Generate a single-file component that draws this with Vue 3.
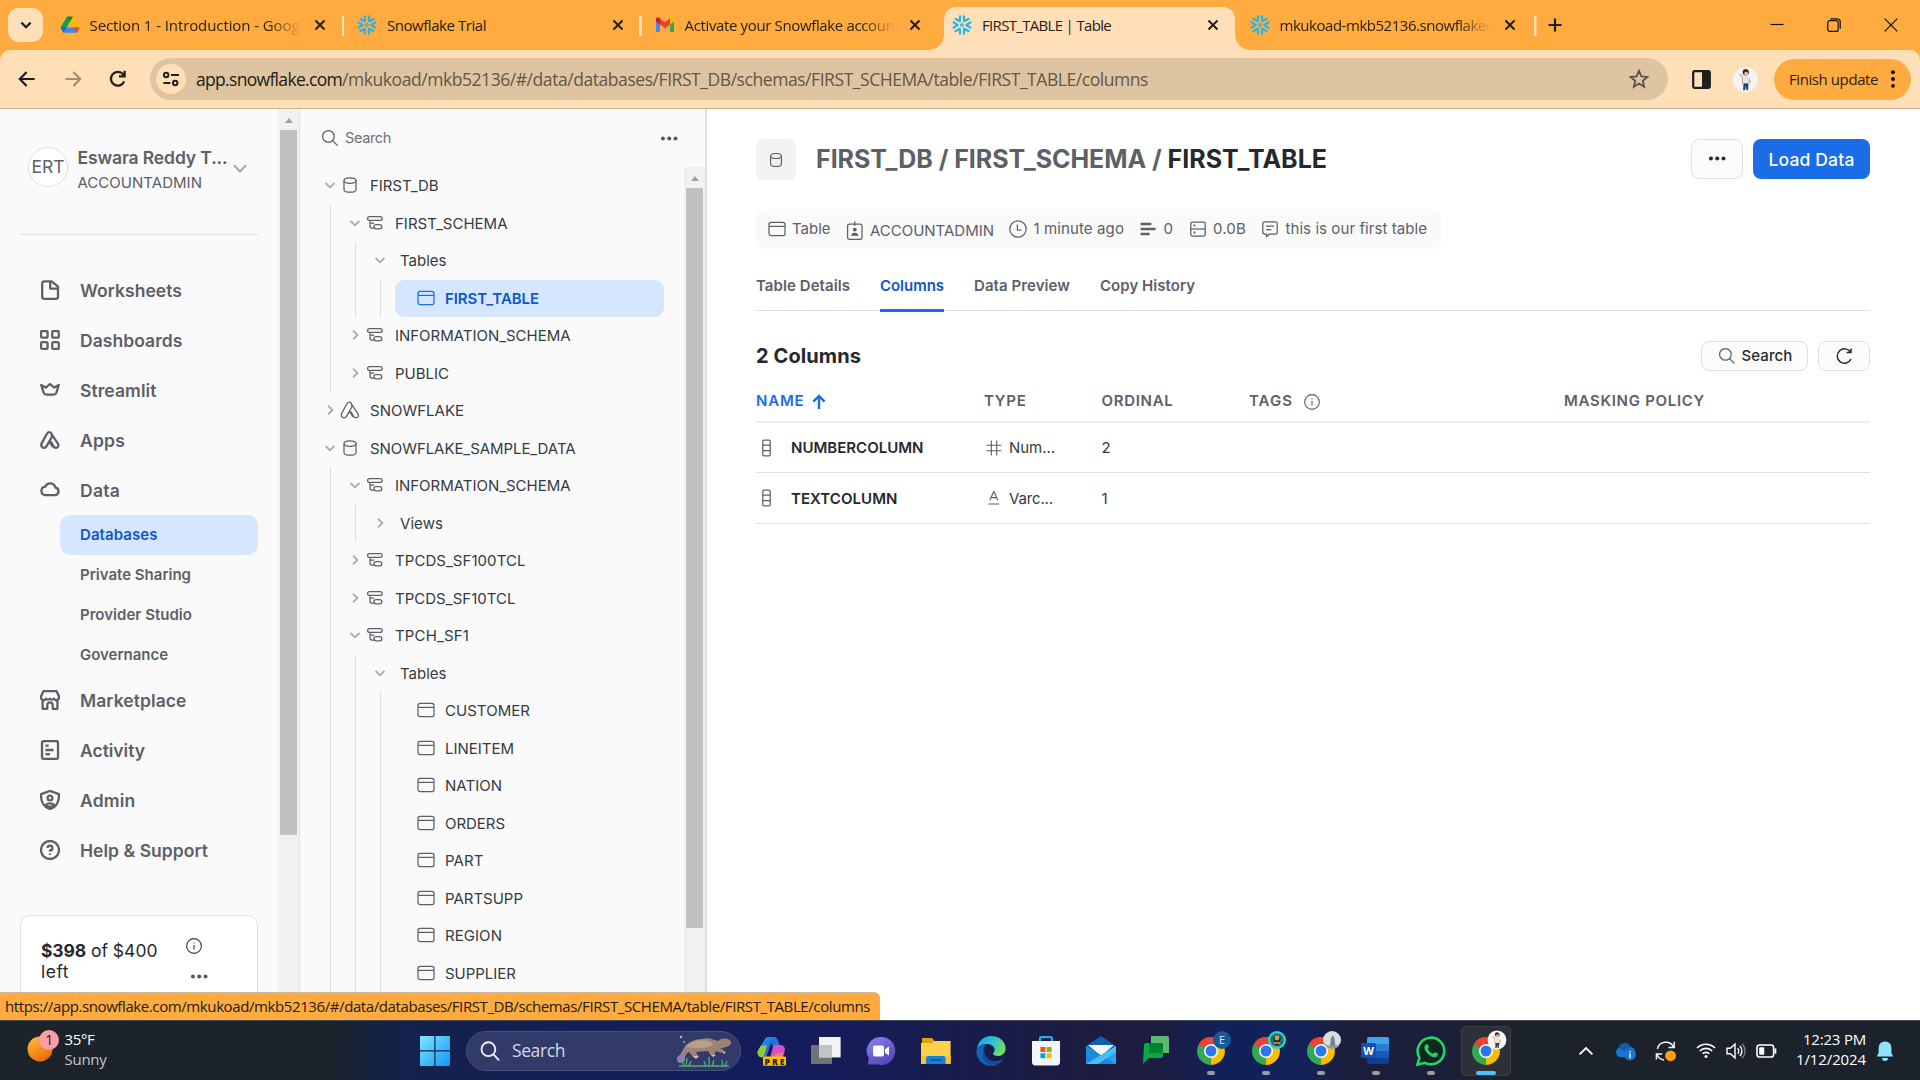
<script setup>
// Spreads a label over a given advance width through its letter-spacing.
const vFit = {
  mounted(el, { value }) {
    const n = el.textContent.length
    const natural = el.getBoundingClientRect().width
    el.style.letterSpacing = ((value - natural) / n).toFixed(3) + 'px'
  },
}

const flake =
  '<g transform="translate(10 10)" fill="none" stroke="#29b5e8" stroke-width="2.3" stroke-linecap="round" stroke-linejoin="round">' +
  [30, 90, 150, 210, 270, 330].map((a) => `<path transform="rotate(${a})" d="M-2.6-8.4L0-4.4L2.6-8.4"/>`).join('') +
  '<path d="M0-1.5L1.5 0L0 1.5L-1.5 0Z" stroke-width="1.3"/></g>'

const appsPath =
  '<path d="M9.3 2.2C8.1 2.2 7.4 2.9 6.8 4L1.6 13.4C.7 15.2 1.6 17.6 3.8 17.8C5.3 17.9 6.2 17 6.8 15.9L11.8 7M11.8 7V4.2C11.4 2.9 10.6 2.2 9.3 2.2M11.8 4.6L17.9 13.6C19 15.5 18.2 17.6 16.1 17.8C14.6 17.9 13.8 17 13.2 15.9L10.8 11.6M6.8 16L9.6 11.2L12.8 17"/>'

const icons = {
  worksheets: '<path d="M4.2 1.3H11.6L18 6.7V16.8A2 2 0 0 1 16 18.8H4.2A2 2 0 0 1 2.2 16.8V3.3A2 2 0 0 1 4.2 1.3ZM10.2 1.5V8.6H17.8"/>',
  dashboards: '<rect x="1" y="1" width="6.6" height="6.6" rx="1.4"/><rect x="12.2" y="1" width="6.6" height="6.6" rx="1.4"/><rect x="1" y="12.2" width="6.6" height="6.6" rx="1.4"/><rect x="12.2" y="12.2" width="6.6" height="6.6" rx="1.4"/>',
  streamlit: '<path d="M1.2 5L5.8 7.6L10 4L14.2 7.6L18.8 5L16.4 12.6A3 3 0 0 1 13.5 14.6H6.5A3 3 0 0 1 3.6 12.6Z"/>',
  apps: appsPath,
  data: '<path d="M5 16.2H15A3.9 3.9 0 0 0 15.4 8.5A5.4 5.4 0 0 0 5.2 7.7A4.3 4.3 0 0 0 5 16.2Z" transform="translate(0 -1)"/>',
  marketplace: '<path d="M3.6 1H16.4L19 6.4V8A2.6 2.6 0 0 1 14 8.6A2.5 2.5 0 0 1 10 8.6A2.5 2.5 0 0 1 6 8.6A2.6 2.6 0 0 1 1 8V6.4ZM2.6 10.2V18.8H7.3V15A2.7 2.7 0 0 1 12.7 15V18.8H17.4V10.2"/>',
  activity: '<rect x="2" y="1" width="16" height="18" rx="2"/><path d="M5.4 5.6H8.6M5.4 10H13.6M5.4 14.2H10"/>',
  admin: '<path d="M10 .9L18.9 4.2C19.4 11 16.6 17.2 10 19C3.4 17.2 .6 11 1.1 4.2Z"/><circle cx="10" cy="8" r="2.4"/><path d="M5.4 15.4C7 12.8 13 12.8 14.6 15.4L10 17Z"/>',
  help: '<circle cx="10" cy="10" r="9"/><path d="M7.6 8A2.4 2.4 0 1 1 10 10.5V11.6M10 13.6V15"/>',
  db: '<path d="M4 5.6V14.4C4 16.4 6.6 17.2 10 17.2S16 16.4 16 14.4V5.6"/><ellipse cx="10" cy="5.6" rx="6" ry="2.8"/>',
  schema: '<rect x="2.6" y="3.6" width="14.6" height="3.8" rx="1.9"/><path d="M5 7.4V13A2 2 0 0 0 7 15H9M5 10H9.2"/><rect x="9" y="11.6" width="7.8" height="4.2" rx="2.1"/>',
  table: '<rect x="2" y="3.4" width="16" height="13.2" rx="2.2"/><path d="M2 7.4H18"/>',
  open: '<path d="M5.6 8L10 12.4L14.4 8" stroke="#a8abaf" stroke-width="1.8"/>',
  closed: '<path d="M8 5.6L12.4 10L8 14.4" stroke="#a8abaf" stroke-width="1.8"/>',
  search: '<circle cx="8.4" cy="8.4" r="5.8"/><path d="M12.7 12.7L17.6 17.6"/>',
  role: '<rect x="2.6" y="3" width="14.4" height="15.4" rx="2"/><path d="M9.8 .6V5"/><circle cx="9.8" cy="8.6" r="1.3" fill="#5d6066"/><path d="M6.9 14.2C7 11.6 12.6 11.6 12.7 14.2Z" fill="#5d6066"/>',
  clock: '<circle cx="10" cy="10" r="8.2"/><path d="M9.4 5.4V11H13.4"/>',
  rows: '<path d="M2.6 5H13.4M2.6 10H17.6M2.6 15H11.6" stroke-width="2.4"/>',
  storage: '<rect x="2.8" y="3" width="14.4" height="14" rx="1.6"/><path d="M2.8 10H17.2"/><path d="M5.6 6.5H7.4M5.6 13.5H7.4" stroke-width="1.8"/>',
  comment: '<path d="M4.8 2.8H15.2A2 2 0 0 1 17.2 4.8V13A2 2 0 0 1 15.2 15H9.4L6.6 17.8V15H4.8A2 2 0 0 1 2.8 13V4.8A2 2 0 0 1 4.8 2.8ZM6 7H14M6 10.6H11.4"/>',
  refresh: '<path d="M17 13A7.2 7.2 0 1 1 16.4 6M17 2.4V6.6H12.6"/>',
  column: '<rect x="6.8" y="2" width="7.4" height="15.8" rx="1.4"/><path d="M6.8 7H14.2M6.8 12.6H14.2"/>',
  number: '<path d="M7 1.8V18.2M13 1.8V18.2M1.6 7H18.4M1.6 13H18.4"/>',
  varchar: '<path d="M5.4 12.6L9.8 2.4L14.2 12.6M6.8 9.6H12.8M3.8 16.6H15.8"/>',
  info: '<circle cx="10" cy="10" r="8.2"/><path d="M10 9V14M10 6V7.2"/>',
  flake,
  drive: '<path d="M7 1.4H13L19.6 12.6H13.4Z" fill="#fbbc04"/><path d="M7 1.4L.6 12.6L3.6 17.8L10 6.8Z" fill="#189d4e"/><path d="M3.6 17.8L6.6 12.6H19.6L16.6 17.8Z" fill="#4285f4"/><path d="M13.4 12.6H19.6L16.6 17.8Z" fill="#ea4335"/><path d="M7 1.4H13L10 6.8Z" fill="#188038"/><path d="M3.6 17.8L.6 12.6H6.6Z" fill="#1967d2"/>',
  gmail: '<path d="M1 4V17H5V9.5L1 6Z" fill="#4285f4"/><path d="M19 4V17H15V9.5L19 6Z" fill="#34a853"/><path d="M1 6.4V4.6C1 2.4 3.2 1.8 4.6 3L10 7.2L15.2 3V9.4L10 13.2L4.9 9.4Z" fill="#ea4335"/><path d="M1 4.4C1.2 2.2 3.4 2 5 3.3V9.4L1 6.4Z" fill="#c5221f"/><path d="M15 3.3C16.6 2 18.9 2.4 19 4.5V6.4L15 9.4Z" fill="#fbbc04"/>',
}

const tabs = [
  { icon: 'drive', title: 'Section 1 - Introduction - Goog', w: 210, fade: true, first: true },
  { icon: 'flake', title: 'Snowflake Trial', w: 99, sep: true },
  { icon: 'gmail', title: 'Activate your Snowflake accoun', w: 210, fade: true, sep: true },
  { icon: 'flake', title: 'FIRST_TABLE | Table', w: 129, active: true },
  { icon: 'flake', title: 'mkukoad-mkb52136.snowflakec', w: 213, fade: true },
]

const nav = [
  { icon: 'worksheets', label: 'Worksheets', w: 102 },
  { icon: 'dashboards', label: 'Dashboards', w: 102.5 },
  { icon: 'streamlit', label: 'Streamlit', w: 76.5 },
  { icon: 'apps', label: 'Apps', w: 45 },
  { icon: 'data', label: 'Data', w: 40 },
  { sub: true, active: true, label: 'Databases', w: 77.5 },
  { sub: true, label: 'Private Sharing', w: 111 },
  { sub: true, label: 'Provider Studio', w: 112 },
  { sub: true, label: 'Governance', w: 88 },
  { icon: 'marketplace', label: 'Marketplace', w: 106.5 },
  { icon: 'activity', label: 'Activity', w: 65 },
  { icon: 'admin', label: 'Admin', w: 55.5 },
  { icon: 'help', label: 'Help & Support', w: 128 },
]

const tree = [
  { d: 0, c: 'open', icon: 'db', label: 'FIRST_DB', w: 68.5 },
  { d: 1, c: 'open', icon: 'schema', label: 'FIRST_SCHEMA', w: 112.5 },
  { d: 2, c: 'open', label: 'Tables', w: 46.5 },
  { d: 3, icon: 'table', label: 'FIRST_TABLE', w: 94, active: true },
  { d: 1, c: 'closed', icon: 'schema', label: 'INFORMATION_SCHEMA', w: 175.5 },
  { d: 1, c: 'closed', icon: 'schema', label: 'PUBLIC', w: 54 },
  { d: 0, c: 'closed', icon: 'apps', label: 'SNOWFLAKE', w: 94 },
  { d: 0, c: 'open', icon: 'db', label: 'SNOWFLAKE_SAMPLE_DATA', w: 205.5 },
  { d: 1, c: 'open', icon: 'schema', label: 'INFORMATION_SCHEMA', w: 175.5 },
  { d: 2, c: 'closed', label: 'Views', w: 43 },
  { d: 1, c: 'closed', icon: 'schema', label: 'TPCDS_SF100TCL', w: 130.5 },
  { d: 1, c: 'closed', icon: 'schema', label: 'TPCDS_SF10TCL', w: 120.5 },
  { d: 1, c: 'open', icon: 'schema', label: 'TPCH_SF1', w: 74 },
  { d: 2, c: 'open', label: 'Tables', w: 46.5 },
  { d: 3, icon: 'table', label: 'CUSTOMER', w: 85 },
  { d: 3, icon: 'table', label: 'LINEITEM', w: 69 },
  { d: 3, icon: 'table', label: 'NATION', w: 57 },
  { d: 3, icon: 'table', label: 'ORDERS', w: 60 },
  { d: 3, icon: 'table', label: 'PART', w: 38.5 },
  { d: 3, icon: 'table', label: 'PARTSUPP', w: 78 },
  { d: 3, icon: 'table', label: 'REGION', w: 57 },
  { d: 3, icon: 'table', label: 'SUPPLIER', w: 71 },
]

const meta = [
  { icon: 'table', label: 'Table', w: 38.5 },
  { icon: 'role', label: 'ACCOUNTADMIN', w: 124 },
  { icon: 'clock', label: '1 minute ago', w: 90.5 },
  { icon: 'rows', label: '0', w: 10 },
  { icon: 'storage', label: '0.0B', w: 33 },
  { icon: 'comment', label: 'this is our first table', w: 141.5 },
]

const sections = [
  { label: 'Table Details', w: 94 },
  { label: 'Columns', w: 64, active: true },
  { label: 'Data Preview', w: 96 },
  { label: 'Copy History', w: 95 },
]

const rows = [
  { name: 'NUMBERCOLUMN', w: 132.5, icon: 'number', type: 'Num...', tw: 46, ord: '2' },
  { name: 'TEXTCOLUMN', w: 106.5, icon: 'varchar', type: 'Varc...', tw: 44, ord: '1' },
]

const chrome =
  '<path d="M15 15L2.9 8A14 14 0 0 1 27.1 8Z" fill="#ea4335"/><path d="M15 15L15 29A14 14 0 0 1 2.9 8Z" fill="#34a853"/><path d="M15 15L27.1 8A14 14 0 0 1 15 29Z" fill="#fbbc04"/><path d="M15 8.4H27.4A14 14 0 0 1 27.8 9.4L20 14Z" fill="#fbbc04"/><path d="M2.9 8L9 18.4L15 15Z" fill="#34a853"/><path d="M2.9 8A14 14 0 0 1 27.3 8.4H15L9 12Z" fill="#ea4335"/><circle cx="15" cy="15" r="7" fill="#fff"/><circle cx="15" cy="15" r="5.5" fill="#2b76ec"/>'
const person =
  '<path d="M-2.2-8C-.5-10 3-9 3-6.2C3-4 1.6-3.4.2-3.4C-1.6-3.4-3-5-2.2-8Z" fill="#3d2a24"/><circle cx=".6" cy="-5" r="1.8" fill="#e8b48e"/><path d="M-5-4.6L-2.4-1.6V3.4H2.6V-1L4.4 2.6" stroke="#d9a47e" stroke-width="1.2" fill="none"/><path d="M-2.4-3L2.8-3.2V3.6H-2Z" fill="#e2e7ea"/><path d="M-1.8 3.4H2.6L2.2 9.4H.8L.4 5.4L-.4 9.4H-2Z" fill="#27415f"/>'

const apps = [
  { art: '<defs><linearGradient id="cp" x2="1" y2="1"><stop stop-color="#1fa2f0"/><stop offset=".5" stop-color="#1873e0"/><stop offset="1" stop-color="#d74fd0"/></linearGradient></defs><path d="M9 3C10 1 11.4 1 14 1H18C21 1 21.8 3.4 22.4 6L24 11H17L15 6.4L11 19C10.2 21.6 8.4 21.6 6 21.6C2.6 21.4.8 18 2 14.4Z" fill="url(#cp)"/><path d="M1.8 15L5 9.6H11L8.4 18.6C7.8 21 6 21.6 4.4 21C2 20 1 18 1.8 15Z" fill="#95c93a"/><path d="M19 9H25C28.4 9.4 29.6 12.4 28.6 15.6L26.8 21.6H14L16.6 12.4C17.2 10.4 17.8 9 19 9Z" fill="#d451c6"/><path d="M20 17H27.6L26.4 22H15Z" fill="#f07a6a"/><rect x="7" y="20.4" width="23" height="9.4" rx="1.6" fill="#ffc400"/>', pre: true },
  { art: '<rect x="0" y="9" width="21" height="19" fill="#717276"/><rect x="8" y="1" width="21.6" height="20.4" fill="#f4f4f5"/><rect x="8" y="9" width="13" height="12.4" fill="#c3c4c8"/>' },
  { art: '<defs><linearGradient id="tc" x2=".6" y2="1"><stop stop-color="#8a84f2"/><stop offset="1" stop-color="#5a45bd"/></linearGradient></defs><path d="M15 1A14 14 0 1 1 12 28.6L1.6 28.6L3 22.6A14 14 0 0 1 15 1Z" fill="url(#tc)"/><rect x="7" y="9.4" width="11" height="11" rx="1.8" fill="#fff"/><path d="M19 13.2L23 10.6V19.4L19 16.8Z" fill="#fff"/>' },
  { art: '<path d="M1 2H11L14 5.4H28V12H1Z" fill="#e3a008"/><path d="M0 7H11L13.6 5H29.6V28H0Z" fill="#ffd04c"/><path d="M0 20H29.6V28H0Z" fill="#fbc22f"/><path d="M5 28V22.4A2.4 2.4 0 0 1 7.4 20H22A2.4 2.4 0 0 1 24.6 22.4V28Z" fill="#1282d8"/><path d="M9 24H20.6" stroke="#0c5a9e" stroke-width="1.6"/>' },
  { art: '<defs><linearGradient id="ed" x2="1" y2=".3"><stop stop-color="#1fa3e4"/><stop offset=".6" stop-color="#2ac3d5"/><stop offset="1" stop-color="#6fdc61"/></linearGradient></defs><path d="M1 13C2 5 8 0 15 0C24 0 29.6 6 29.6 12.4C29.6 17 26 20 21.6 20C18.6 20 17 19 17 17.8C17 17 18.6 16.4 18.6 13.6C18.6 10.6 15 8 10.4 8C6 8 2.6 10 1 13Z" fill="url(#ed)"/><path d="M.4 14.6C2 9.6 6 8 10.2 8C7 11 6.6 17 9 20.6C12 25.4 20 27.4 27.4 22.4C24.6 27.4 20 29.8 15 29.8C6 29.8 0 23 .4 14.6Z" fill="#1264b8"/><path d="M10.2 8C5 14 9.6 25 19.4 25.6C22.6 25.6 25.2 24 27.4 22.4C25 26.6 21 29.6 16 29.8C7 27.6 3 15.4 10.2 8Z" fill="#124b9a"/>' },
  { art: '<path d="M9 7V2.6A1.4 1.4 0 0 1 10.4 1.2H19.6A1.4 1.4 0 0 1 21 2.6V7" fill="none" stroke="#2aa7ee" stroke-width="2.2"/><path d="M1 5H29V26A3.4 3.4 0 0 1 25.6 29.4H4.4A3.4 3.4 0 0 1 1 26Z" fill="#f3f5f7"/><rect x="9.4" y="11" width="5" height="5" fill="#f25022"/><rect x="15.6" y="11" width="5" height="5" fill="#7fba00"/><rect x="9.4" y="17.2" width="5" height="5" fill="#00a4ef"/><rect x="15.6" y="17.2" width="5" height="5" fill="#ffb900"/>' },
  { art: '<path d="M15 0L30 10V20H0V10Z" fill="#0e5fb0"/><path d="M2 9H28L15 20Z" fill="#f5f8fb"/><path d="M0 10L15 20L30 10V28H0Z" fill="#2aa3ea"/><path d="M0 10L30 28H0Z" fill="#1b8be0"/><path d="M30 10L0 28H12L30 16Z" fill="#44c0f4"/>' },
  { art: '<path d="M10 0H26A2 2 0 0 1 28 2V17H10Z" fill="#5bb974"/><path d="M3 9A2 2 0 0 1 5 7H22V20A2 2 0 0 1 20 22H7.6L2 28Z" fill="#00ac47"/><path d="M8 7H22V17H8Z" fill="#00832d"/>' },
  { art: chrome, running: true, badge: '<circle r="9" fill="#17599b"/>', letter: 'E' },
  { art: chrome, running: true, badge: '<circle r="9" fill="#1de0c6"/><circle r="6.8" fill="#3b6870"/><path d="M-4-3H4L2 5H-2Z" fill="#1e2b32"/><circle cy="-2" r="2.4" fill="#caa05f"/><path d="M-3 3H3" stroke="#e0b040" stroke-width="1.4"/>' },
  { art: chrome, running: true, badge: '<circle r="9" fill="#d8dde0"/><path d="M-2 6L-1-2L1-5L2.6-1L3.4 6Z" fill="#77838c"/><path d="M-8 3C-5 7 5 7 8 3C6 8 2 9 0 9C-4 9-7 6-8 3Z" fill="#929c94"/>' },
  { art: '<path d="M8 1H26A2 2 0 0 1 28 3V8H6V3A2 2 0 0 1 8 1Z" fill="#41a5ee"/><path d="M6 8H28V15H6Z" fill="#2b7cd3"/><path d="M6 15H28V22H6Z" fill="#185abd"/><path d="M6 22H28V26A2 2 0 0 1 26 28H8A2 2 0 0 1 6 26Z" fill="#103f91"/><rect x="0" y="7" width="15" height="15" rx="1.6" fill="#174fb0"/>', running: true, word: true },
  { art: '<path d="M1.4 28.6L3.4 21.6A13.3 13.3 0 1 1 8.8 26.8Z" fill="#10271f" stroke="#25d366" stroke-width="2.6"/><path d="M10 8.4C11.4 7.4 12 8.6 12.8 10.8C13 11.6 11.6 12.6 12 13.4C13 15.2 14.6 16.8 16.6 17.6C17.4 17.8 18.2 16 19 16.2L21.8 17.6C22.4 18 21.6 20.6 19.6 21.2C16 22.4 8.6 16.6 8.4 11.6C8.4 10.2 9.2 9 10 8.4Z" fill="#25d366"/>', running: true },
  { art: chrome, current: true, badge: '<circle r="9.4" fill="#f7f7f8"/><g transform="scale(.86)">' + person + '</g>' },
]
</script>

<template>
  <div class="screen">
    <header class="tabstrip">
      <button class="tabsearch">
        <svg width="12" height="12" viewBox="0 0 12 12"><path d="M1.4 3.6L6 8.2L10.6 3.6" fill="none" stroke="#1f1f1f" stroke-width="2.2" /></svg>
      </button>
      <div v-for="(t, i) in tabs" :key="i" class="tab" :class="{ active: t.active, sep: t.sep, first: t.first }">
        <svg class="fav" width="20" height="20" viewBox="0 0 20 20" v-html="icons[t.icon]" />
        <span class="tabtitle" :class="{ fade: t.fade }"><span v-fit="t.w" class="t">{{ t.title }}</span></span>
        <svg class="x" width="12" height="12" viewBox="0 0 12 12"><path d="M1.5 1.5L10.5 10.5M10.5 1.5L1.5 10.5" stroke="#1f1f1f" stroke-width="2" /></svg>
      </div>
      <div class="newtab">
        <svg width="14" height="14" viewBox="0 0 14 14"><path d="M7 .5V13.5M.5 7H13.5" stroke="#1f1f1f" stroke-width="2.2" /></svg>
      </div>
      <div class="wincontrols">
        <svg width="14" height="14" viewBox="0 0 14 14"><path d="M.5 6.5H13.5" stroke="#111" stroke-width="1.2" /></svg>
        <svg width="14" height="14" viewBox="0 0 14 14" fill="none" stroke="#111" stroke-width="1.2"><rect x=".8" y="2.6" width="10.4" height="10.8" rx="2" /><path d="M3.4.8H10.4A2.8 2.8 0 0 1 13.2 3.6V10.8" /></svg>
        <svg width="14" height="14" viewBox="0 0 14 14"><path d="M.7.7L13.3 13.3M13.3.7L.7 13.3" stroke="#111" stroke-width="1.2" /></svg>
      </div>
    </header>

    <div class="toolbarwrap">
      <div class="toolbar">
        <div class="navbtns">
          <svg width="18" height="18" viewBox="0 0 18 18" fill="none" stroke="#1f1f1f" stroke-width="2.2"><path d="M16.6 9H2M8.6 2L1.8 9L8.6 16" /></svg>
          <svg width="18" height="18" viewBox="0 0 18 18" fill="none" stroke="#a18d73" stroke-width="2.2"><path d="M1.4 9H16M9.4 2L16.2 9L9.4 16" /></svg>
          <svg width="18" height="18" viewBox="0 0 18 18" fill="none" stroke="#1f1f1f" stroke-width="2.3"><path d="M15.2 11.4A6.9 6.9 0 1 1 14.2 4.4L15.6 6M15.6 .8V6.4H10" /></svg>
        </div>
        <div class="omnibox">
          <div class="site">
            <svg width="18" height="16" viewBox="0 0 18 16" fill="none" stroke="#1f1f1f" stroke-width="2"><circle cx="4.2" cy="4" r="2.2" /><path d="M9 4H17M1.4 12H8.4" /><circle cx="13.2" cy="12" r="2.2" /></svg>
          </div>
          <span v-fit="146" class="t url host">app.snowflake.com</span><span v-fit="806" class="t url">/mkukoad/mkb52136/#/data/databases/FIRST_DB/schemas/FIRST_SCHEMA/table/FIRST_TABLE/columns</span>
          <svg class="star" width="20" height="20" viewBox="0 0 20 20" fill="none" stroke="#5a5148" stroke-width="1.8"><path d="M10 1.8L12.4 7.4L18.4 7.9L13.8 11.9L15.2 17.8L10 14.6L4.8 17.8L6.2 11.9L1.6 7.9L7.6 7.4Z" /></svg>
        </div>
        <svg class="panel" width="19" height="19" viewBox="0 0 19 19"><rect x="1.2" y="1.2" width="16.6" height="16.6" rx="1.6" fill="#ffdfb8" stroke="#1f1f1f" stroke-width="2.2" /><path d="M10 1H17.6V18H10Z" fill="#1f1f1f" /></svg>
        <svg class="me" width="25" height="25" viewBox="-12.5 -12.5 25 25"><circle r="12.5" fill="#f3f4f6" /><g transform="scale(1.15)" v-html="person" /></svg>
        <button class="update"><span v-fit="89" class="t">Finish update</span>
          <svg width="4" height="18" viewBox="0 0 4 18"><circle cx="2" cy="2.2" r="1.9" /><circle cx="2" cy="9" r="1.9" /><circle cx="2" cy="15.8" r="1.9" /></svg>
        </button>
      </div>
    </div>

    <div class="page">
      <aside class="side">
        <div class="sidebody">
          <div class="account">
            <div class="avatar"><span v-fit="33" class="t">ERT</span></div>
            <div class="who">
              <span v-fit="150" class="t name">Eswara Reddy T...</span>
              <span v-fit="124.5" class="t role">ACCOUNTADMIN</span>
            </div>
            <svg class="chev" width="14" height="10" viewBox="0 0 14 10"><path d="M1.6 2L7 7.4L12.4 2" fill="none" stroke="#a8abaf" stroke-width="2.2" stroke-linecap="round" /></svg>
          </div>
          <nav class="nav">
            <div v-for="n in nav" :key="n.label" class="navitem" :class="{ sub: n.sub, active: n.active }">
              <svg v-if="n.icon" class="line thick" width="20" height="20" viewBox="0 0 20 20" v-html="icons[n.icon]" />
              <span v-fit="n.w" class="t">{{ n.label }}</span>
            </div>
          </nav>
          <div class="credit">
            <p><b v-fit="45" class="t">$398</b><span v-fit="71.5" class="t"> of $400</span><br /><span v-fit="28" class="t">left</span></p>
            <div class="creditside">
              <svg class="line dark" width="18" height="18" viewBox="0 0 20 20" v-html="icons.info" />
              <i class="dots"></i>
            </div>
          </div>
        </div>
        <div class="scroll a"><i></i><b></b></div>
      </aside>

      <section class="objects">
        <div class="find">
          <svg class="line" width="20" height="20" viewBox="0 0 20 20" v-html="icons.search" />
          <span v-fit="46" class="t">Search</span>
          <i class="dots"></i>
        </div>
        <div class="treewrap">
          <div class="tree">
            <div v-for="(r, i) in tree" :key="i" class="row">
              <i v-for="g in r.d" :key="g" class="guide"></i>
              <div class="node" :class="{ leaf: r.d === 3, active: r.active }">
                <svg v-if="r.c" class="line" width="20" height="20" viewBox="0 0 20 20" v-html="icons[r.c]" />
                <svg v-if="r.icon" class="line ico" :class="r.icon" width="20" height="20" viewBox="0 0 20 20" v-html="icons[r.icon]" />
                <span v-fit="r.w" class="t">{{ r.label }}</span>
              </div>
            </div>
          </div>
          <div class="scroll b"><i></i><b></b></div>
        </div>
      </section>

      <main class="main">
        <div class="head">
          <div class="dbbox"><svg class="line" width="18" height="18" viewBox="0 0 20 20" v-html="icons.db" /></div>
          <h1><span v-fit="351.5" class="t">FIRST_DB / FIRST_SCHEMA / </span><b v-fit="159.5" class="t">FIRST_TABLE</b></h1>
          <button class="btn more"><i class="dots"></i></button>
          <button class="load"><span v-fit="86" class="t">Load Data</span></button>
        </div>
        <div class="meta">
          <div v-for="m in meta" :key="m.label" class="metaitem" :class="m.icon">
            <svg class="line" width="20" height="20" viewBox="0 0 20 20" v-html="icons[m.icon]" />
            <span v-fit="m.w" class="t">{{ m.label }}</span>
          </div>
        </div>
        <div class="sections">
          <div v-for="s in sections" :key="s.label" class="section" :class="{ active: s.active }"><span v-fit="s.w" class="t">{{ s.label }}</span></div>
        </div>
        <div class="listhead">
          <h2 v-fit="105" class="t">2 Columns</h2>
          <button class="btn srch"><svg class="line" width="20" height="20" viewBox="0 0 20 20" v-html="icons.search" /><span v-fit="51" class="t">Search</span></button>
          <button class="btn refresh"><svg class="line" width="20" height="20" viewBox="0 0 20 20" v-html="icons.refresh" /></button>
        </div>
        <div class="grid ghead">
          <div class="sorted"><span v-fit="48.5" class="t">NAME</span>
            <svg width="14" height="16" viewBox="0 0 14 16" fill="none" stroke="#1a6ce7" stroke-width="2.4"><path d="M7 15V2.4M1.4 7.6L7 2L12.6 7.6" /></svg></div>
          <div><span v-fit="42.5" class="t">TYPE</span></div>
          <div><span v-fit="72" class="t">ORDINAL</span></div>
          <div class="tags"><span v-fit="44" class="t">TAGS</span><svg class="line" width="18" height="18" viewBox="0 0 20 20" v-html="icons.info" /></div>
          <div><span v-fit="141" class="t">MASKING POLICY</span></div>
        </div>
        <div v-for="r in rows" :key="r.name" class="grid grow">
          <div class="cname"><svg class="line" width="20" height="20" viewBox="0 0 20 20" v-html="icons.column" /><span v-fit="r.w" class="t">{{ r.name }}</span></div>
          <div class="ctype"><svg class="line" width="18" height="18" viewBox="0 0 20 20" v-html="icons[r.icon]" /><span v-fit="r.tw" class="t">{{ r.type }}</span></div>
          <div>{{ r.ord }}</div>
        </div>
      </main>

      <div class="status"><span v-fit="865" class="t">https://app.snowflake.com/mkukoad/mkb52136/#/data/databases/FIRST_DB/schemas/FIRST_SCHEMA/table/FIRST_TABLE/columns</span></div>
    </div>

    <footer class="taskbar">
      <div class="weather">
        <svg width="34" height="34" viewBox="0 0 34 34"><defs><linearGradient id="sun" x2=".6" y2="1"><stop stop-color="#ffc23c" /><stop offset="1" stop-color="#ef6a0c" /></linearGradient></defs><circle cx="13" cy="20" r="12.5" fill="url(#sun)" /><circle cx="22" cy="11" r="10" fill="#fb9ca6" /><text x="18.2" y="15.6" font-size="14" fill="#222">1</text></svg>
        <div><span v-fit="30" class="t">35°F</span><span v-fit="42" class="t dim">Sunny</span></div>
      </div>
      <svg class="start" width="30" height="30" viewBox="0 0 30 30"><defs><linearGradient id="win" x2="1" y2="1"><stop stop-color="#7fe6ff" /><stop offset="1" stop-color="#0f96f5" /></linearGradient></defs><path d="M0 0H14.3V14.3H0ZM15.5 0H30V14.3H15.5ZM0 15.5H14.3V30H0ZM15.5 15.5H30V30H15.5Z" fill="url(#win)" /></svg>
      <div class="tsearch">
        <svg width="20" height="20" viewBox="0 0 20 20" fill="none" stroke="#f2f2f5" stroke-width="1.9" stroke-linecap="round"><circle cx="8.4" cy="8.2" r="6.9" /><path d="M13.4 13.4L18.6 18.8" /></svg>
        <span v-fit="53" class="t">Search</span>
        <svg class="platypus" width="56" height="34" viewBox="0 0 56 34">
          <path d="M2 28C0 24 2 22 4 21L8 14C10 9 18 5 26 5C32 3 38 6 42 7C46 3 54 4 55 8C56 12 48 14 44 14L48 16L46 19L40 17L38 21L34 20L32 17L20 18L22 22L17 23L13 18C10 19 9 22 9 25C9 28 4 30 2 28Z" fill="#9c8375" />
          <path d="M10 13C14 7 24 5 32 7C38 8 38 12 32 13C24 15 16 14 10 13Z" fill="#b8a08a" />
          <path d="M2 28C0 24 2 22 4 21L8 20L9 25C9 28 4 30 2 28Z" fill="#8d7bc0" />
          <path d="M17 22L23 22L20 25ZM34 20L40 21L37 23ZM46 17L50 18L48 20Z" fill="#d9c0b0" />
          <path d="M3 32H53M8 32L6 26M10 32L11 24M13 32L15 27M30 32L28 27M33 32L33 23M36 32L38 26M47 32L46 26M49 32L51 27" stroke="#4fae7c" stroke-width="1.3" />
          <circle cx="5" cy="3" r="1.2" fill="#9eb6e8" /><circle cx="8" cy="8" r=".9" fill="#9eb6e8" />
        </svg>
      </div>
      <div class="dock">
        <div v-for="(a, i) in apps" :key="i" class="app" :class="{ running: a.running, current: a.current }">
          <svg width="30" height="30" viewBox="0 0 30 30">
            <g v-html="a.art" />
            <text v-if="a.pre" x="8.5" y="28.5" font-size="8.6" font-weight="800" fill="#2a2200" textLength="20">PRE</text>
            <text v-if="a.word" x="2.2" y="18.6" font-size="11" font-weight="700" fill="#fff" textLength="10.6" lengthAdjust="spacingAndGlyphs">W</text>
          </svg>
          <svg v-if="a.badge" class="badge" width="20" height="20" viewBox="-10 -10 20 20"><g v-html="a.badge" /><text v-if="a.letter" x="-3.2" y="4.2" font-size="11.5" fill="#cfe3f7">{{ a.letter }}</text></svg>
        </div>
      </div>
      <div class="tray">
        <svg width="16" height="10" viewBox="0 0 16 10"><path d="M1.6 8.4L8 2L14.4 8.4" fill="none" stroke="#fff" stroke-width="1.8" /></svg>
        <svg width="22" height="20" viewBox="0 0 22 20"><path d="M5 16A5 5 0 0 1 3.6 6.8A6.4 6.4 0 0 1 15.6 6A5 5 0 0 1 20 12L14 16Z" fill="#1679cf" /><path d="M3.6 6.8A6.4 6.4 0 0 1 15.6 6L10 11Z" fill="#1160ae" /><circle cx="15" cy="13.6" r="6" fill="#1d73c9" /><path d="M15 12.4V17M15 10V11.2" stroke="#fff" stroke-width="1.4" /></svg>
        <svg width="22" height="22" viewBox="0 0 22 22" fill="none" stroke="#f4f4f4" stroke-width="1.5"><path d="M2.4 9A8.6 8.6 0 0 1 18.6 7.2M19.2 1.8V7.6H13.4M9 20A9 9 0 0 1 2 14.4M1.4 19.6V14H7.2" /><circle cx="15.6" cy="15.8" r="5.4" fill="#ff9f0f" stroke="none" /></svg>
        <svg width="20" height="17" viewBox="0 0 20 17" fill="none" stroke="#fff" stroke-width="1.6"><path d="M1 6A12.6 12.6 0 0 1 19 6M3.8 9A8.6 8.6 0 0 1 16.2 9M6.6 11.8A4.8 4.8 0 0 1 13.4 11.8" /><circle cx="10" cy="14.6" r="1.5" fill="#fff" stroke="none" /></svg>
        <svg width="20" height="18" viewBox="0 0 20 18" fill="none" stroke="#fff" stroke-width="1.4"><path d="M1 6.2H4.4L9 2V16L4.4 11.8H1ZM11.6 6.2A4 4 0 0 1 11.6 11.8M13.8 4A7 7 0 0 1 13.8 14" /><path d="M16 1.8A10 10 0 0 1 16 16.2" stroke="#777d84" /></svg>
        <svg width="22" height="14" viewBox="0 0 22 14"><rect x="1" y="1" width="16.6" height="12" rx="2.6" fill="none" stroke="#fff" stroke-width="1.6" /><rect x="3.2" y="3.2" width="5" height="7.6" rx="1" fill="#fff" /><path d="M19.4 4.4V9.6" stroke="#fff" stroke-width="1.8" /></svg>
      </div>
      <div class="clocktext"><span v-fit="63" class="t">12:23 PM</span><span v-fit="70" class="t">1/12/2024</span></div>
      <svg class="bell" width="18" height="20" viewBox="0 0 18 20"><path d="M9 .6A6 6 0 0 1 15.4 7V12L17.2 15.6H.8L2.6 12V7A6 6 0 0 1 9 .6Z" fill="#8fe3fb" /><path d="M6 17H12A3 3 0 0 1 6 17Z" fill="#8fe3fb" /></svg>
    </footer>
  </div>
</template>

<style>
body {
  margin: 0;
  overflow: hidden;
}
</style>

<style scoped>
* {
  box-sizing: border-box;
}
.screen {
  width: 1920px;
  height: 1080px;
  display: flex;
  flex-direction: column;
  overflow: hidden;
  background: #fff;
  font-family: Inter, sans-serif;
  font-size: 15px;
  color: #25292e;
}
.t {
  display: inline-block;
  white-space: pre;
  flex: none;
}
svg {
  display: block;
  flex: none;
}
button {
  font: inherit;
  border: 0;
  padding: 0;
  display: flex;
  align-items: center;
  justify-content: center;
  flex: none;
}
.line {
  fill: none;
  stroke: #5d6066;
  stroke-width: 1.25;
  stroke-linejoin: round;
}
.thick {
  stroke-width: 2.3;
}
.dark {
  stroke: #36393e;
}

/* browser chrome */
.tabstrip {
  height: 50px;
  flex: none;
  display: flex;
  background: #ffab40;
  font: 15px/20px 'Open Sans', sans-serif;
  font-stretch: 88%;
  color: #2b2014;
}
.tabsearch {
  width: 35px;
  height: 34px;
  margin: 8px 3px 0 8px;
  border-radius: 11px;
  background: #ffdfb8;
}
.tab {
  position: relative;
  width: 297.5px;
  height: 50px;
  flex: none;
  display: flex;
  align-items: center;
  padding-left: 13.5px;
}
.tab .fav {
  margin-right: 10px;
}
.tabtitle {
  width: 214px;
  overflow: hidden;
}
.tabtitle .t {
  display: block;
  width: max-content;
}
.fade {
  mask-image: linear-gradient(90deg, #000 83%, transparent 98.5%);
}
.tab .x {
  margin-left: 10.5px;
}
.tab.sep::before {
  content: '';
  position: absolute;
  left: -2px;
  top: 16px;
  width: 2.5px;
  height: 20px;
  border-radius: 1px;
  background: #ffdfb8;
}
.tab.active::before {
  content: '';
  position: absolute;
  inset: 7px 1px 0 5px;
  background: #ffdfb8;
  border-radius: 12px 12px 0 0;
}
.tab.active::after {
  content: '';
  position: absolute;
  left: -10px;
  right: -14px;
  bottom: 0;
  height: 15px;
  background:
    radial-gradient(circle at 0 0, transparent 14.5px, #ffdfb8 15px) left / 15px 15px no-repeat,
    radial-gradient(circle at 100% 0, transparent 14.5px, #ffdfb8 15px) right / 15px 15px no-repeat;
}
.tab.active > * {
  position: relative;
}
.newtab {
  display: flex;
  align-items: center;
  width: 60px;
  padding-left: 14px;
  background: linear-gradient(#ffdfb8, #ffdfb8) 0 16px / 2.5px 20px no-repeat;
}
.wincontrols {
  margin-left: auto;
  display: flex;
  align-items: center;
  gap: 43px;
  padding-right: 22px;
}
.toolbarwrap {
  height: 59px;
  flex: none;
  background: #ffab40;
}
.toolbar {
  height: 59px;
  display: flex;
  align-items: center;
  background: #ffdfb8;
  border-bottom: 1px solid #ceb28f;
  border-radius: 10px 10px 0 0;
  font-family: 'Open Sans', sans-serif;
  font-stretch: 88%;
}
.navbtns {
  display: flex;
  gap: 27.5px;
  padding: 0 23px 0 18px;
}
.omnibox {
  width: 1518px;
  height: 42px;
  flex: none;
  display: flex;
  align-items: center;
  border-radius: 21px;
  background: #dfc4a1;
}
.site {
  width: 30px;
  height: 30px;
  margin: 0 10px 0 6px;
  border-radius: 50%;
  background: #ffdfb8;
  display: flex;
  align-items: center;
  justify-content: center;
}
.url {
  font-size: 17.5px;
  line-height: 24px;
  color: #635749;
}
.host {
  color: #211c17;
}
.star {
  margin: 0 19px 0 auto;
}
.panel {
  margin-left: 23.5px;
}
.me {
  margin-left: 22.5px;
}
.update {
  width: 137px;
  height: 41px;
  margin-left: auto;
  margin-right: 9px;
  padding: 0 1px 1px 0;
  border-radius: 21px;
  background: #ffab40;
  color: #2b2014;
  font-size: 15px;
  font-stretch: 88%;
  gap: 13px;
}

/* page */
.page {
  position: relative;
  height: 911px;
  flex: none;
  display: flex;
  overflow: hidden;
}
.side {
  width: 300px;
  flex: none;
  display: flex;
  background: #fafafa;
  border-right: 1px solid #e3e3e4;
}
.sidebody {
  width: 278px;
  flex: none;
  padding: 0 20px;
  color: #5d6066;
}
.account {
  height: 126px;
  display: flex;
  padding: 38px 0 0 8px;
  border-bottom: 1px solid #e1e2e3;
}
.avatar {
  width: 40px;
  height: 40px;
  border: 1px solid #dfe0e2;
  border-radius: 50%;
  background: #fff;
  font-size: 17.5px;
  line-height: 38px;
  display: flex;
  justify-content: center;
}
.who {
  display: flex;
  flex-direction: column;
  align-items: flex-start;
  width: 160px;
  flex: none;
  padding-left: 9.5px;
}
.name {
  font-size: 17.5px;
  font-weight: 600;
  line-height: 22px;
}
.role {
  margin-top: 4px;
  font-size: 15px;
  line-height: 20px;
}
.chev {
  margin: 17px 0 0 5px;
}
.nav {
  padding-top: 30px;
}
.navitem {
  height: 50px;
  display: flex;
  align-items: center;
  padding-left: 20px;
  font-size: 17.5px;
  font-weight: 600;
}
.navitem svg {
  margin-right: 20px;
}
.navitem.sub {
  height: 40px;
  margin-left: 40px;
  padding-bottom: 2px;
  font-size: 15px;
  font-weight: 600;
}
.navitem.active {
  border-radius: 10px;
  background: #d6e6ff;
  color: #0f57c9;
}
.credit {
  height: 120px;
  margin-top: 40px;
  border: 1px solid #dfe0e2;
  border-radius: 10px;
  background: #fff;
  color: #25292e;
  display: flex;
  padding: 24px 0 0 20px;
  font-size: 17.5px;
}
.credit p {
  width: 143px;
  margin: 0;
  line-height: 21px;
}
.credit b {
  font-weight: 700;
}
.creditside {
  margin: -3px 0 0 1px;
}
.creditside .dots {
  margin: 19px 0 0 6px;
}
.dots {
  display: block;
  width: 17px;
  height: 5px;
  flex: none;
  background: radial-gradient(circle at 2px 2.5px, currentColor 1.7px, transparent 2.3px) 0 0 / 6.3px 5px repeat-x;
  color: #55585e;
}
.scroll {
  width: 21px;
  flex: none;
  display: flex;
  flex-direction: column;
  align-items: center;
  background: #f1f1f1;
}
.scroll i {
  width: 0;
  height: 0;
  margin: 9px 0 7px;
  border: 4.5px solid transparent;
  border-top-width: 0;
  border-bottom: 5px solid #a0a0a0;
}
.scroll b {
  width: 17px;
  background: #c1c1c1;
}
.scroll.a b {
  height: 705px;
}
.scroll.b b {
  height: 740px;
}

.objects {
  width: 407px;
  flex: none;
  background: #fafafa;
  border-right: 2px solid #dfe0e2;
}
.find {
  height: 58px;
  display: flex;
  align-items: center;
  padding: 0 27px 0 20px;
  color: #6e7177;
  font-size: 14.6px;
}
.find span {
  margin: 0 0 1px 5px;
}
.find .dots {
  margin-left: auto;
}
.treewrap {
  display: flex;
}
.tree {
  width: 384px;
  flex: none;
  padding-left: 20px;
  color: #363b41;
}
.row {
  height: 37.5px;
  display: flex;
}
.guide {
  width: 25px;
  background: linear-gradient(#dcdddf, #dcdddf) 10px 0 / 1px 100% no-repeat;
}
.node {
  display: flex;
  align-items: center;
}
.node svg {
  margin-bottom: 1px;
}
.node .t {
  margin-left: 10px;
}
.leaf {
  width: 269px;
  padding-left: 20.5px;
  border-radius: 9px;
}
.leaf .t {
  margin-left: 9.5px;
}
.leaf.active {
  background: #d6e6ff;
  color: #0f57c9;
}
.leaf.active .t {
  font-weight: 600;
}
.leaf.active svg {
  stroke: #1a6ce7;
}
.treewrap .scroll {
  height: 850px;
}

/* content */
.main {
  width: 1114px;
  margin-left: 49px;
  color: #5d6066;
}
.head {
  display: flex;
  margin-top: 30px;
  height: 41px;
}
.dbbox {
  width: 40px;
  height: 41px;
  display: flex;
  align-items: center;
  justify-content: center;
  border-radius: 8px;
  background: #f2f2f2;
}
h1 {
  margin: 0 0 0 20px;
  font-size: 25px;
  line-height: 41px;
  font-weight: 700;
  display: flex;
}
h1 b {
  font-weight: 700;
  color: #25292e;
}
.btn {
  border: 1px solid #dfe0e2;
  border-radius: 8px;
  background: #fbfbfb;
}
.more {
  width: 52px;
  height: 40px;
  margin-left: auto;
  padding-bottom: 2px;
}
.more .dots {
  color: #25292e;
}
.load {
  width: 117px;
  height: 40px;
  margin-left: 10px;
  border-radius: 8px;
  background: #1a6ce7;
  color: #fff;
  font-size: 17.5px;
  font-weight: 500;
}
.meta {
  width: 685px;
  height: 40px;
  margin-top: 29px;
  padding-left: 10.5px;
  border-radius: 8px;
  background: #fafafa;
  display: flex;
  align-items: center;
}
.metaitem {
  height: 20px;
  display: flex;
  align-items: center;
  margin-right: 14.5px;
}
.metaitem span {
  margin: 0 -0.5px 1px 5.5px;
}
.sections {
  height: 62px;
  display: flex;
  gap: 30px;
  border-bottom: 1px solid #dfe0e2;
}
.section {
  height: 63px;
  padding-top: 27px;
  line-height: 20px;
}
.section .t {
  font-weight: 600;
}
.section.active {
  color: #0f57c9;
  border-bottom: 3px solid #1a6ce7;
}
.listhead {
  height: 90px;
  display: flex;
  align-items: center;
}
h2 {
  margin: 0;
  font-size: 20px;
  font-weight: 700;
  color: #25292e;
}
.srch {
  width: 107px;
  height: 30px;
  margin-left: auto;
  color: #25292e;
  font-weight: 500;
}
.srch span {
  margin: 0 0 1px 5px;
}
.refresh {
  width: 52px;
  height: 30px;
  margin-left: 10px;
}
.refresh svg {
  stroke: #25292e;
  stroke-width: 1.5;
}
.grid {
  display: grid;
  grid-template-columns: 228px 117.5px 147.5px 315px 1fr;
  align-items: center;
}
.ghead {
  height: 22px;
  border-bottom: 2px solid #ededee;
  font-weight: 600;
  align-items: start;
}
.ghead > div {
  margin-top: -10px;
  line-height: 20px;
  display: flex;
  align-items: center;
}
.sorted {
  color: #1a6ce7;
}
.sorted svg {
  margin: 2px 0 0 7.5px;
}
.tags svg {
  margin: 1px 0 0 10px;
}
.grow {
  height: 51px;
  border-bottom: 1px solid #dfe0e2;
  color: #363b41;
}
.ghead + .grow {
  height: 50px;
}
.grow > div {
  display: flex;
  align-items: center;
}
.cname span {
  margin-left: 15px;
  font-weight: 600;
  color: #25292e;
}
.ctype svg {
  margin-left: 0.5px;
}
.ctype span {
  margin-left: 6.5px;
}
.status {
  position: absolute;
  left: 0;
  bottom: 0;
  width: 880px;
  height: 28px;
  padding-left: 5px;
  border-top: 1px solid #c9b9a4;
  border-radius: 0 6px 0 0;
  background: #ffab40;
  color: #221c14;
  font: 15px/26px 'Open Sans', sans-serif;
  font-stretch: 88%;
}

/* taskbar */
.taskbar {
  position: relative;
  height: 60px;
  display: flex;
  align-items: center;
  border-top: 1px solid #454a58;
  background: linear-gradient(90deg, #1c232b 0, #1c232b 330px, #14224c 400px, #141f58 620px, #141c5c 800px, #181c4c 960px, #1d1c40 1090px, #1c1d40 1160px, #12205a 1220px, #14225a 1300px, #1b1e3c 1350px, #1b1f38 1440px, #1c222b 1520px, #1c222b 100%);
  color: #fff;
  font: 15px/20px 'Open Sans', sans-serif;
  font-stretch: 88%;
}
.weather {
  width: 419.5px;
  display: flex;
  align-items: center;
  padding-left: 27px;
}
.weather svg {
  margin-bottom: 9px;
}
.weather div {
  margin: 0 0 4px 3.5px;
  display: flex;
  flex-direction: column;
  align-items: flex-start;
}
.dim {
  color: #c3c7cc;
}
.tsearch {
  width: 275px;
  height: 40px;
  margin-left: 16.5px;
  display: flex;
  align-items: center;
  padding: 0 8px 0 13px;
  border: 1px solid #484f78;
  border-radius: 20px;
  background: #313a68;
  color: #d5d8e4;
  font-size: 17.5px;
}
.tsearch span {
  margin: 0 0 1px 12px;
}
.platypus {
  margin-left: auto;
}
.dock {
  display: flex;
  margin-left: 5px;
}
.app {
  position: relative;
  width: 50px;
  height: 50px;
  margin-right: 5px;
  display: flex;
  align-items: center;
  justify-content: center;
  border-radius: 5px;
}
.badge {
  position: absolute;
  right: 4px;
  top: 4px;
}
.running::after,
.current::after {
  content: '';
  position: absolute;
  left: 21px;
  bottom: 1px;
  width: 8px;
  height: 4px;
  border-radius: 2px;
  background: #9a9da6;
}
.current {
  background: #2c3038;
  box-shadow: inset 0 0 0 1px #3a3e46;
}
.current::after {
  left: 15px;
  width: 20px;
  background: #4cc2ff;
}
.tray {
  display: flex;
  align-items: center;
  margin-left: 62px;
}
.tray svg:nth-child(2) {
  margin-left: 21px;
}
.tray svg:nth-child(3) {
  margin-left: 18px;
}
.tray svg:nth-child(4) {
  margin-left: 19px;
}
.tray svg:nth-child(5) {
  margin-left: 10px;
}
.tray svg:nth-child(6) {
  margin-left: 10px;
}
.clocktext {
  margin: 0 0 4px auto;
  display: flex;
  flex-direction: column;
  align-items: flex-end;
}
.bell {
  margin: 0 26px 0 10px;
}
</style>
